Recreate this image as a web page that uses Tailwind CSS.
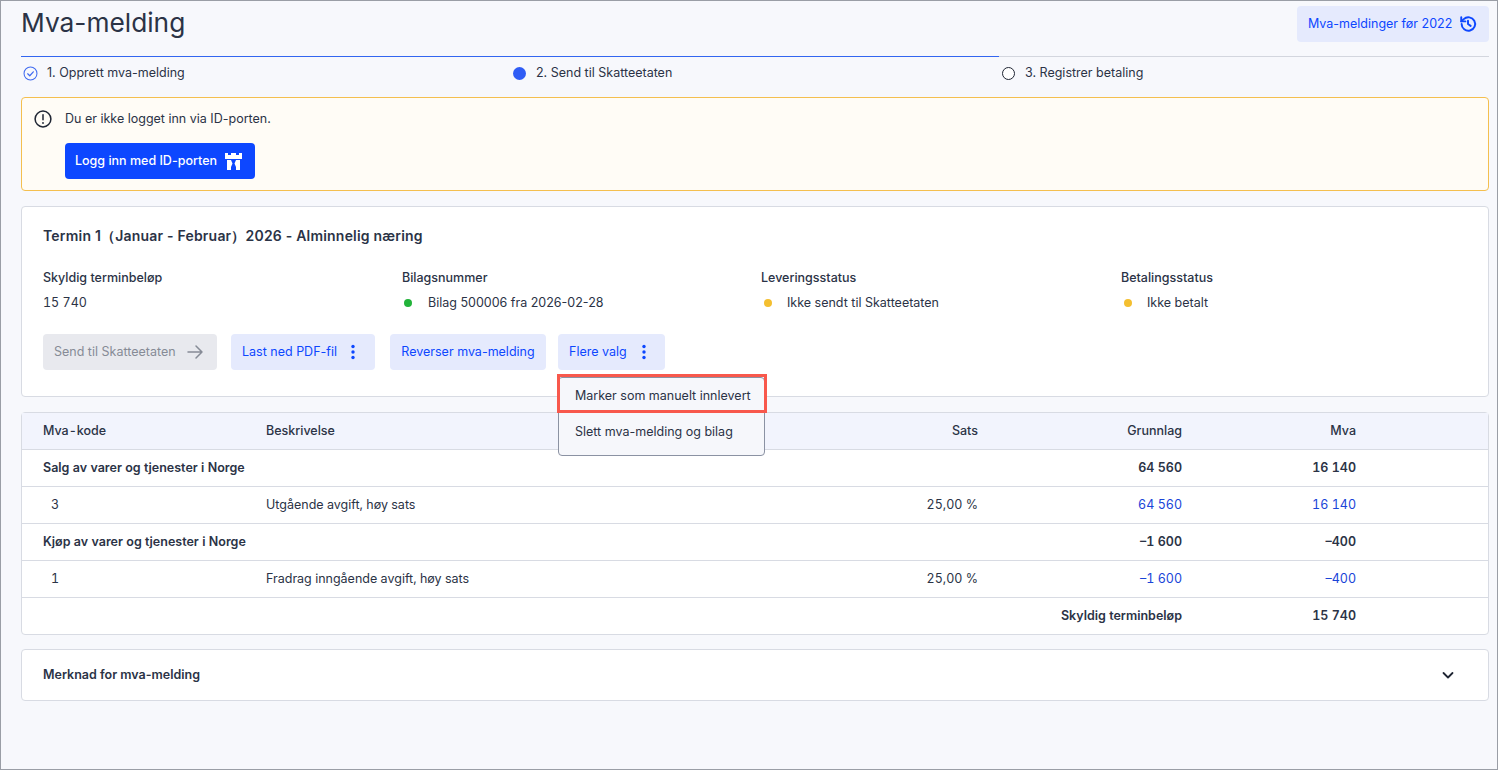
<!DOCTYPE html>
<html lang="nb">
<head>
    <meta charset="UTF-8">
    <meta name="viewport" content="width=device-width, initial-scale=1.0">
    <title>Mva-melding</title>
    <script src="https://cdn.jsdelivr.net/npm/@tailwindcss/browser@4"></script>
</head>
<body class="font-['Inter',sans-serif] text-[12.5px] text-[#2b3346]">
    <div class="h-[770px] w-[1498px] overflow-hidden border border-[#9a9ea6] bg-[#f7f8fc] pl-5 pr-2">

        <!-- header -->
        <div class="flex h-[55px] items-start justify-between pt-[5px]">
            <h1 class="text-[26.3px] leading-[34px] text-[#2b3346]">Mva-melding</h1>
            <button class="flex h-9 w-[192px] items-center gap-[7px] rounded bg-[#e5eafd] pl-[11px] text-[#0d47ff]">
                Mva-meldinger før 2022
                <svg class="h-[18px] w-[18px]" viewBox="0 0 24 24" fill="none" stroke="currentColor" stroke-width="2.6" stroke-linecap="round" stroke-linejoin="round"><path d="M3.500 12a9 9 0 1 0 2.800-6.500L3 8.500"/><path d="M3 3v5.500h5.500"/><path d="M12 7.500V12l3.500 2.500"/></svg>
            </button>
        </div>

        <!-- steps -->
        <div class="grid h-[41px] grid-cols-[489px_489px_1fr]">
            <div class="flex items-center border-t border-[#3366f0] pl-[2px] pb-[8px]">
                <svg class="h-[15px] w-[15px]" viewBox="0 0 16 16" fill="none" stroke="#3f6af0" stroke-width="1.100"><circle cx="8" cy="8" r="6.900"/><path d="M5 8.300l2.200 2.100L11 6.200" stroke-linecap="round" stroke-linejoin="round" stroke-width="1.300"/></svg>
                <span class="ml-[9px]">1. Opprett mva-melding</span>
            </div>
            <div class="flex items-center border-t border-[#3366f0] pl-[3px] pb-[8px]">
                <span class="h-[13px] w-[13px] rounded-full bg-[#2f5cf5]"></span>
                <span class="ml-[10px]">2. Send til Skatteetaten</span>
            </div>
            <div class="flex items-center border-t border-[#d3d6de] pl-[3px] pb-[8px]">
                <span class="h-[13px] w-[13px] rounded-full border border-[#1f2533] bg-white"></span>
                <span class="ml-[10px]">3. Registrer betaling</span>
            </div>
        </div>

        <!-- alert -->
        <div class="flex h-[94px] rounded border border-[#f4bf4f] bg-[#fffcf6] pl-[12px] pt-[12px]">
            <svg class="h-[18px] w-[18px]" viewBox="0 0 18 18" fill="none" stroke="#1f2533" stroke-width="1.500" stroke-linecap="round"><circle cx="9" cy="9" r="7.900"/><path d="M9 4.800v5"/><path d="M9 12.900v.1" stroke-width="1.800"/></svg>
            <div class="ml-[13px]">
                <p class="leading-[18px]">Du er ikke logget inn via ID-porten.</p>
                <button class="mt-[15px] flex h-9 w-[190px] items-center gap-[8px] rounded bg-[#0d47ff] pl-[10px] font-medium text-white">
                    Logg inn med ID-porten
                    <svg class="h-[17px] w-[17px]" viewBox="0 0 17 17" fill="#fff"><path d="M0 0h3v2h3V0h5v2h3V0h3v6H0z"/><path d="M2 7h4l1.500 3.500L6 14v3H2z"/><path d="M15 7h-4L9.500 10.500 11 14v3h4z"/></svg>
                </button>
            </div>
        </div>

        <!-- summary card -->
        <div class="relative mt-[15px] h-[191px] rounded border border-[#d8dbe3] bg-white pl-[21px] pt-[20px]">
            <h2 class="text-[14px] font-semibold leading-[18px] tracking-[0.2px]">Termin 1（Januar - Februar）2026 - Alminnelig næring</h2>
            <div class="mt-[24px] grid grid-cols-[359px_359px_360px_1fr]">
                <div>
                    <p class="font-medium leading-[18px]">Skyldig terminbeløp</p>
                    <p class="mt-[7px] leading-[18px] tabular-nums">15 740</p>
                </div>
                <div>
                    <p class="font-medium leading-[18px]">Bilagsnummer</p>
                    <p class="mt-[7px] flex items-center leading-[18px]"><span class="ml-[2px] mr-[16px] h-2 w-2 rounded-full bg-[#22b33a]"></span>Bilag 500006 fra 2026-02-28</p>
                </div>
                <div>
                    <p class="font-medium leading-[18px]">Leveringsstatus</p>
                    <p class="mt-[7px] flex items-center leading-[18px]"><span class="ml-[3px] mr-[15px] h-2 w-2 rounded-full bg-[#f4bf30]"></span>Ikke sendt til Skatteetaten</p>
                </div>
                <div>
                    <p class="font-medium leading-[18px]">Betalingsstatus</p>
                    <p class="mt-[7px] flex items-center leading-[18px]"><span class="ml-[3px] mr-[15px] h-2 w-2 rounded-full bg-[#f4bf30]"></span>Ikke betalt</p>
                </div>
            </div>
            <div class="mt-[22px] flex">
                <button class="flex h-9 w-[174px] items-center gap-[10px] rounded bg-[#e8e9ee] pl-[11px] text-[#868b96]">
                    Send til Skatteetaten
                    <svg class="h-[18px] w-[18px]" viewBox="0 0 18 18" fill="none" stroke="#868b96" stroke-width="1.500" stroke-linecap="round" stroke-linejoin="round"><path d="M2 9h14M10 3l6 6-6 6"/></svg>
                </button>
                <button class="ml-[14px] flex h-9 w-[144px] items-center gap-[14px] rounded bg-[#e5eafd] pl-[11px] text-[#0d47ff]">
                    Last ned PDF-fil
                    <svg class="h-4 w-1" viewBox="0 0 4 16" fill="#0d47ff"><circle cx="2" cy="2.500" r="1.700"/><circle cx="2" cy="8" r="1.700"/><circle cx="2" cy="13.500" r="1.700"/></svg>
                </button>
                <button class="ml-[15px] flex h-9 w-[156px] items-center justify-center rounded bg-[#e5eafd] text-[#0d47ff]">Reverser mva-melding</button>
                <button class="ml-[12px] flex h-9 w-[107px] items-center gap-[15px] rounded bg-[#e5eafd] pl-[11px] text-[#0d47ff]">
                    Flere valg
                    <svg class="h-4 w-1" viewBox="0 0 4 16" fill="#0d47ff"><circle cx="2" cy="2.500" r="1.700"/><circle cx="2" cy="8" r="1.700"/><circle cx="2" cy="13.500" r="1.700"/></svg>
                </button>
            </div>

            <!-- dropdown, sits over the table -->
            <div class="absolute left-[536px] top-[170px] z-10 w-[207px] rounded border border-[#8b92a3] bg-[#f6f7fb] pb-[5px]">
                <div class="flex h-[36px] items-center pl-4">Marker som manuelt innlevert</div>
                <div class="flex h-[36px] items-center pl-4">Slett mva-melding og bilag</div>
            </div>
            <div class="absolute left-[535px] top-[167px] z-20 h-[39px] w-[210px] border-[3px] border-[#f8584c]"></div>
        </div>

        <!-- table -->
        <div class="mt-[15px] h-[223px] rounded border border-[#d8dbe3] bg-white tabular-nums">
            <div class="grid h-[37px] grid-cols-[223px_534px_178px_204px_174px] items-center border-b border-[#d8dbe3] bg-[#f2f4fd] pl-[21px] font-medium">
                <span>Mva-kode</span><span>Beskrivelse</span><span class="text-right">Sats</span><span class="text-right">Grunnlag</span><span class="text-right">Mva</span>
            </div>
            <div class="grid h-[37px] grid-cols-[223px_534px_178px_204px_174px] items-center border-b border-[#d8dbe3] pl-[21px] font-semibold">
                <span class="col-span-3 whitespace-nowrap">Salg av varer og tjenester i Norge</span><span class="text-right">64 560</span><span class="text-right">16 140</span>
            </div>
            <div class="grid h-[37px] grid-cols-[223px_534px_178px_204px_174px] items-center border-b border-[#d8dbe3] pl-[21px]">
                <span class="pl-2">3</span><span>Utgående avgift, høy sats</span><span class="text-right">25,00 %</span><span class="text-right text-[#1a45d8]">64 560</span><span class="text-right text-[#1a45d8]">16 140</span>
            </div>
            <div class="grid h-[37px] grid-cols-[223px_534px_178px_204px_174px] items-center border-b border-[#d8dbe3] pl-[21px] font-semibold">
                <span class="col-span-3 whitespace-nowrap">Kjøp av varer og tjenester i Norge</span><span class="text-right">–1 600</span><span class="text-right">–400</span>
            </div>
            <div class="grid h-[37px] grid-cols-[223px_534px_178px_204px_174px] items-center border-b border-[#d8dbe3] pl-[21px]">
                <span class="pl-2">1</span><span>Fradrag inngående avgift, høy sats</span><span class="text-right">25,00 %</span><span class="text-right text-[#1a45d8]">–1 600</span><span class="text-right text-[#1a45d8]">–400</span>
            </div>
            <div class="grid h-[36px] grid-cols-[223px_534px_178px_204px_174px] items-center pl-[21px] font-semibold">
                <span class="col-span-4 text-right">Skyldig terminbeløp</span><span class="text-right">15 740</span>
            </div>
        </div>

        <!-- note -->
        <div class="mt-[14px] flex h-[52px] items-center justify-between rounded border border-[#d8dbe3] bg-white pl-[21px] pr-[33px]">
            <span class="font-semibold">Merknad for mva-melding</span>
            <svg class="h-[14px] w-[14px]" viewBox="0 0 14 14" fill="none" stroke="#1f2533" stroke-width="1.800" stroke-linecap="round" stroke-linejoin="round"><path d="M2.500 5l4.500 4.500L11.500 5"/></svg>
        </div>
    </div>
</body>
</html>
